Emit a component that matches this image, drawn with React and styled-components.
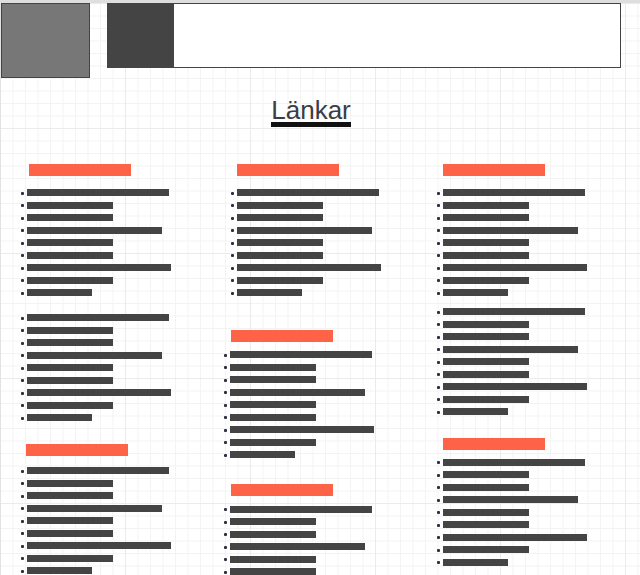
import React from "react";
import styled, { createGlobalStyle } from "styled-components";

const GlobalStyle = createGlobalStyle`
  html, body {
    margin: 0;
    padding: 0;
    overflow: hidden;
    background: #ffffff;
  }
`;

const Page = styled.div`
  box-sizing: border-box;
  width: 640px;
  height: 575px;
  overflow: hidden;
  border-top: 3px solid #dedede;
  border-left: 1px solid #e2e2e2;
  font-family: "Liberation Sans", Arial, sans-serif;
  background-color: #ffffff;
  background-image:
    linear-gradient(to right, transparent 124px, #ebebeb 124px),
    linear-gradient(to bottom, #ebebeb 1px, transparent 1px),
    linear-gradient(to right, transparent 11.5px, #f3f3f3 11.5px),
    linear-gradient(to bottom, #f3f3f3 1px, transparent 1px);
  background-size: 125px 125px, 125px 125px, 12.5px 12.5px, 12.5px 12.5px;
`;

const TopRow = styled.div`
  display: flex;
  align-items: flex-start;
  gap: 17px;
  width: 620px;
`;

const LogoBox = styled.div`
  box-sizing: border-box;
  width: 89px;
  height: 75px;
  background: #777777;
  border: 1px solid #444444;
`;

const HeaderBox = styled.div`
  box-sizing: border-box;
  display: flex;
  width: 514px;
  height: 65px;
  background: #ffffff;
  border: 1px solid #444444;
  border-left: none;
`;

const HeaderBlock = styled.div`
  width: 67px;
  background: #444444;
`;

const TitleWrap = styled.div`
  width: 620px;
  margin-top: 20px;
  text-align: center;
`;

const Title = styled.h1`
  display: inline-block;
  margin: 0;
  font-size: 26px;
  line-height: 24px;
  font-weight: normal;
  color: #3b3d42;
  border-bottom: 5px solid #111111;
`;

const Columns = styled.div`
  display: grid;
  grid-template-columns: 210px 206px 1fr;
  margin-top: 37px;
  margin-left: 16px;
`;

const Column = styled.div`
  display: flex;
  flex-direction: column;
`;

const Section = styled.section`
  margin-top: ${(p) => p.$top || 0}px;
  margin-left: ${(p) => p.$shift || 0}px;
`;

const SectionHead = styled.div`
  width: 102px;
  height: 12px;
  background: #ff6347;
  margin-left: ${(p) => p.$indent}px;
  margin-bottom: ${(p) => p.$gap}px;
`;

const LinkList = styled.ul`
  list-style: none;
  margin: 0;
  padding: 0;
`;

const LinkRow = styled.li`
  display: flex;
  align-items: flex-start;
  height: 12.5px;
  padding-left: 4px;
`;

const Bullet = styled.span`
  width: 3px;
  height: 3px;
  margin-top: 2.5px;
  margin-right: 3px;
  border-radius: 1px;
  background: #2b3142;
`;

const LinkBar = styled.span`
  display: block;
  height: 7px;
  background: #444444;
`;

const widths = [142, 86, 86, 135, 86, 86, 144, 86, 65];

const columns = [
  [
    { top: 0, head: { indent: 12, gap: 13 } },
    { top: 12.5 },
    { top: 17.5, head: { indent: 9, gap: 11 } },
  ],
  [
    { top: 0, head: { indent: 10, gap: 13 } },
    { top: 28.5, shift: -7, head: { indent: 11, gap: 9 } },
    { top: 20.5, shift: -7, head: { indent: 11, gap: 9.5 } },
  ],
  [
    { top: 0, head: { indent: 10, gap: 13 } },
    { top: 6.5 },
    { top: 17.5, head: { indent: 10, gap: 8.5 } },
  ],
];

function LinkSection({ top, shift, head }) {
  return (
    <Section $top={top} $shift={shift}>
      {head && <SectionHead $indent={head.indent} $gap={head.gap} />}
      <LinkList>
        {widths.map((w, i) => (
          <LinkRow key={i}>
            <Bullet />
            <LinkBar style={{ width: w }} />
          </LinkRow>
        ))}
      </LinkList>
    </Section>
  );
}

export default function App() {
  return (
    <>
      <GlobalStyle />
      <Page>
        <TopRow>
          <LogoBox />
          <HeaderBox>
            <HeaderBlock />
          </HeaderBox>
        </TopRow>
        <TitleWrap>
          <Title>Länkar</Title>
        </TitleWrap>
        <Columns>
          {columns.map((sections, c) => (
            <Column key={c}>
              {sections.map((s, i) => (
                <LinkSection key={i} {...s} />
              ))}
            </Column>
          ))}
        </Columns>
      </Page>
    </>
  );
}
